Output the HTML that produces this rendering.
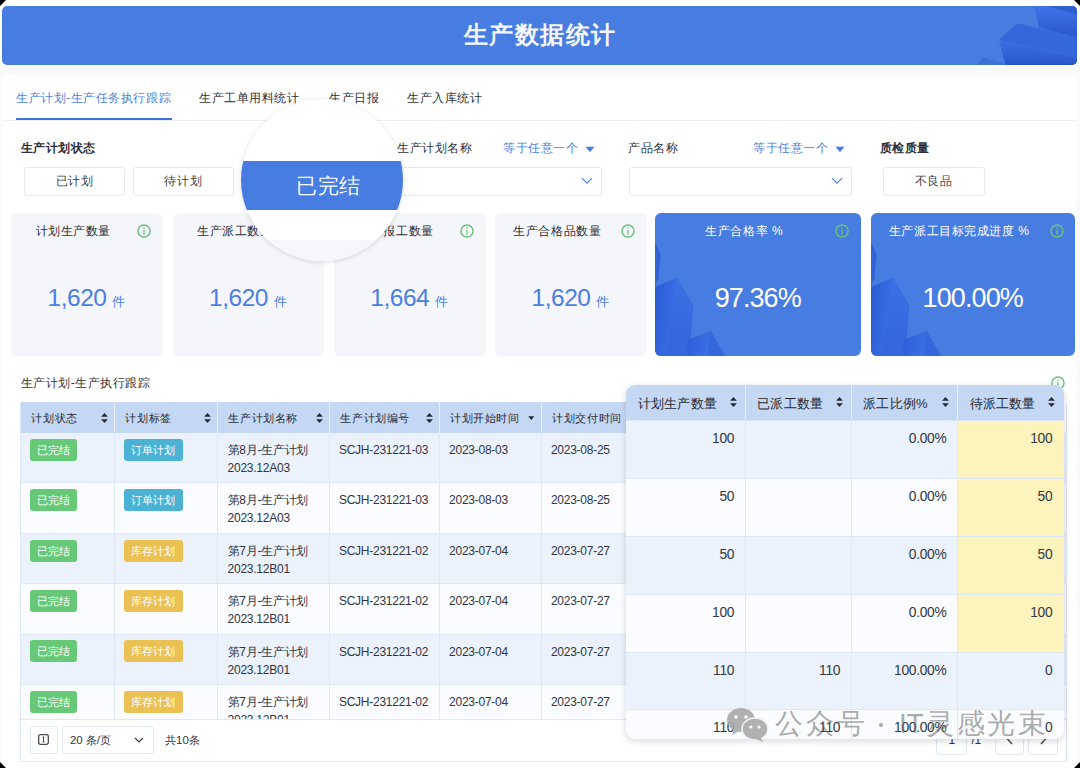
<!DOCTYPE html>
<html><head><meta charset="utf-8"><style>
*{margin:0;padding:0;box-sizing:border-box}
html,body{width:1080px;height:768px;overflow:hidden;background:#fafafc;font-family:"Liberation Sans",sans-serif;color:#333}
.a{position:absolute;white-space:nowrap}
#banner{left:2px;top:5.5px;width:1075px;height:59.7px;border-radius:5px;background:#477de1;overflow:hidden}
#title{left:0;width:1075px;top:13.2px;text-align:center;font-size:24px;font-weight:bold;color:#f4f6fb;line-height:32px;letter-spacing:1.5px;text-indent:1.5px}
#gray{left:0;top:0;width:1080px;height:65px;background:#fff}
#card{left:2px;top:74.5px;width:1075px;height:694px;background:#fff}
.cj{font-size:12px;letter-spacing:0.55px}
.tab{line-height:16px;top:89.5px;color:#2b2e35}
.lbl{line-height:16px;top:140px;color:#2f323a}
.btn{height:29px;top:166.5px;border:1px solid #e6e8ec;border-radius:3px;background:#fff;line-height:27px;text-align:center;color:#3a3f48}
.sel{height:28.5px;top:167px;border:1px solid #e6e8ec;border-radius:3px;background:#fff}
.blue{color:#4a7fe0}
.sc{top:213px;height:142.5px;border-radius:6px;background:#f5f6fa;overflow:hidden}
.sct{top:10px;line-height:16px;color:#2b2e35;text-align:center}
.num{top:71px;left:0;text-align:center;font-size:24.5px;line-height:28px;color:#4a7fe0;letter-spacing:-0.5px}
.num small{font-size:13px;margin-left:6px;letter-spacing:0.5px}
.bc{background:#477de1}
.bc .sct,.bc .num{color:#fff}
.bc .num{font-size:27px;top:70.5px;letter-spacing:-0.9px}
.info{width:14px;height:14px;line-height:0}
/* table */
#tbl{left:20.4px;top:402px;width:1047px;height:359.5px;border:1px solid #dfe8f6;border-top:0;overflow:hidden;background:#fff}
.th{top:0;height:31px;background:#c5d8f3}
.thd{top:0;height:31px;width:1px;background:#e9f0fa}
.tht{top:7.5px;font-size:11px;letter-spacing:0.6px;line-height:16px;color:#262a33}
.sort{width:7px;height:10px}
.tr{left:0;width:1047px;height:50.4px;border-bottom:1px solid #dfe8f6}
.odd{background:#ebf2fc}.even{background:#fafcff}
.vd{width:1px;background:#dfe8f6}
.td{font-size:12px;line-height:18px;color:#30353e;letter-spacing:-0.25px}
.badge{height:22px;line-height:22px;border-radius:3px;color:#fff;font-size:11px;padding:0 7.2px 0 6.6px;letter-spacing:0.2px}
.g{background:#67c878}.c{background:#4bb2d4}.y{background:#ebc153}
.pbtn{border:1px solid #dfe8f6;border-radius:3px;background:#fff}
/* panel */
#panel{left:626px;top:384.5px;width:437.6px;height:354.2px;border-radius:9px;overflow:hidden;background:#fafcff;box-shadow:0 2px 7px rgba(0,0,0,0.16)}
.ph{top:0;height:35.4px;background:#c5d8f3}
.pr{left:0;width:437.6px;height:58px;border-top:1px solid #dfe8f6}
.pt{font-size:13px;line-height:18px;color:#262a33;letter-spacing:0.2px}
.pn{font-size:13.8px;line-height:18px;color:#333842;text-align:right;letter-spacing:-0.3px}
.wm{top:703.5px;font-size:28px;line-height:40px;color:rgba(100,100,100,0.55);letter-spacing:2.9px}
</style></head><body>
<div class="a" id="gray"></div><div class="a" id="card"></div>
<div class="a" id="banner"><svg class="a" style="left:0;top:0" width="1075" height="60" viewBox="0 0 1075 60"><defs><linearGradient id="bf" x1="0" y1="0" x2="0" y2="1"><stop offset="0" stop-color="#3f74e8"/><stop offset="1" stop-color="#2b57cb"/></linearGradient><linearGradient id="bf2" x1="0" y1="0" x2="0" y2="1"><stop offset="0" stop-color="#3b70e6"/><stop offset="0.8" stop-color="#2d5bd0"/><stop offset="1" stop-color="#2450c0"/></linearGradient></defs><path d="M1031.9 0.6 L1037.4 21.7 L1075 31.5 L1075 0Z" fill="url(#bf)"/><path d="M1046 0 L1075 0 L1075 9Z" fill="#2f5fcf"/><path d="M996.9 33.9 L1015.2 17.3 L1075 31.2 L1075 52.3Z" fill="#3468d9"/><path d="M996.9 33.9 L1075 52.3 L1075 60 L1003.6 60Z" fill="url(#bf2)"/><path d="M973 60 L980.8 51.7 L1004.7 57.8 L1004.7 60Z" fill="#3d6fdb"/></svg><div class="a" id="title">生产数据统计</div></div>
<div class="a tab cj blue" style="left:16px">生产计划-生产任务执行跟踪</div>
<div class="a tab cj" style="left:199px">生产工单用料统计</div>
<div class="a tab cj" style="left:329px">生产日报</div>
<div class="a tab cj" style="left:407px">生产入库统计</div>
<div class="a" style="left:15.5px;top:117.6px;width:156.5px;height:2.8px;background:#3f72de"></div>
<div class="a" style="left:2px;top:120.2px;width:1075px;height:1px;background:#eeeff2"></div>
<div class="a lbl cj" style="left:20.5px;font-weight:bold;color:#2a2f3a">生产计划状态</div>
<div class="a btn cj" style="left:24px;width:101px">已计划</div>
<div class="a btn cj" style="left:132.5px;width:101.5px">待计划</div>
<div class="a lbl cj" style="left:397px">生产计划名称</div>
<div class="a lbl cj blue" style="left:503px">等于任意一个</div>
<svg class="a" style="left:585px;top:146px" width="10" height="7"><path d="M0.5 0.8 L9.5 0.8 L5 6.2Z" fill="#4a7fe0"/></svg>
<div class="a sel" style="left:378px;width:223.5px"></div>
<svg class="a" style="left:580.5px;top:177px" width="12" height="8"><path d="M1 1.2 L6 6.2 L11 1.2" fill="none" stroke="#4a7fe0" stroke-width="1.2"/></svg>
<div class="a lbl cj" style="left:628px">产品名称</div>
<div class="a lbl cj blue" style="left:753px">等于任意一个</div>
<svg class="a" style="left:835px;top:146px" width="10" height="7"><path d="M0.5 0.8 L9.5 0.8 L5 6.2Z" fill="#4a7fe0"/></svg>
<div class="a sel" style="left:628.5px;width:223px"></div>
<svg class="a" style="left:830.5px;top:177px" width="12" height="8"><path d="M1 1.2 L6 6.2 L11 1.2" fill="none" stroke="#4a7fe0" stroke-width="1.2"/></svg>
<div class="a lbl cj" style="left:879.5px;font-weight:bold;color:#2a2f3a">质检质量</div>
<div class="a btn cj" style="left:883px;width:101.5px">不良品</div>
<div class="a sc" style="left:11px;width:151.5px"><div class="a sct cj" style="left:0;width:124.5px">计划生产数量</div><div class="a info" style="left:126.2px;top:10.75px"><svg style="display:block" width="14" height="14" viewBox="0 0 14 14"><circle cx="7" cy="7" r="6.05" fill="none" stroke="#6cc17c" stroke-width="1.45"/><rect x="6.35" y="5.9" width="1.3" height="4.9" rx="0.65" fill="#6cc17c"/><circle cx="7" cy="4.1" r="0.8" fill="#6cc17c"/></svg></div><div class="a num" style="width:151.5px">1,620<small>件</small></div></div>
<div class="a sc" style="left:172.5px;width:151.5px"><div class="a sct cj" style="left:0;width:124.5px">生产派工数量</div><div class="a info" style="left:126.2px;top:10.75px"><svg style="display:block" width="14" height="14" viewBox="0 0 14 14"><circle cx="7" cy="7" r="6.05" fill="none" stroke="#6cc17c" stroke-width="1.45"/><rect x="6.35" y="5.9" width="1.3" height="4.9" rx="0.65" fill="#6cc17c"/><circle cx="7" cy="4.1" r="0.8" fill="#6cc17c"/></svg></div><div class="a num" style="width:151.5px">1,620<small>件</small></div></div>
<div class="a sc" style="left:333.5px;width:152px"><div class="a sct cj" style="left:0;width:125px">生产报工数量</div><div class="a info" style="left:126.7px;top:10.75px"><svg style="display:block" width="14" height="14" viewBox="0 0 14 14"><circle cx="7" cy="7" r="6.05" fill="none" stroke="#6cc17c" stroke-width="1.45"/><rect x="6.35" y="5.9" width="1.3" height="4.9" rx="0.65" fill="#6cc17c"/><circle cx="7" cy="4.1" r="0.8" fill="#6cc17c"/></svg></div><div class="a num" style="width:152px">1,664<small>件</small></div></div>
<div class="a sc" style="left:495px;width:151.5px"><div class="a sct cj" style="left:0;width:124.5px">生产合格品数量</div><div class="a info" style="left:126.2px;top:10.75px"><svg style="display:block" width="14" height="14" viewBox="0 0 14 14"><circle cx="7" cy="7" r="6.05" fill="none" stroke="#6cc17c" stroke-width="1.45"/><rect x="6.35" y="5.9" width="1.3" height="4.9" rx="0.65" fill="#6cc17c"/><circle cx="7" cy="4.1" r="0.8" fill="#6cc17c"/></svg></div><div class="a num" style="width:151.5px">1,620<small>件</small></div></div>
<div class="a sc bc" style="left:655px;width:205.5px"><svg class="a" style="left:0;top:0" width="205.5" height="143" viewBox="0 0 205.5 143"><defs><linearGradient id="dg655" x1="0" y1="0" x2="1" y2="0.3"><stop offset="0" stop-color="#2a5bd6"/><stop offset="1" stop-color="#3a6fe6"/></linearGradient><linearGradient id="dh655" x1="0" y1="0" x2="0" y2="1"><stop offset="0" stop-color="#3b70e4"/><stop offset="1" stop-color="#3466dc"/></linearGradient></defs>
<path d="M0 29 L5.7 41.6 L3.3 66.2 L0 72.7Z" fill="#3164d9"/>
<path d="M0 73.8 L22.1 64.5 L9.8 143 L0 143Z" fill="url(#dg655)"/>
<path d="M22.1 64.5 L38.5 92.4 L34.4 143 L9.8 143Z" fill="url(#dh655)"/>
<path d="M32.8 126.5 L55.7 117.8 L52 143 L32 143Z" fill="url(#dg655)"/>
<path d="M55.7 117.8 L70.5 143 L52 143Z" fill="#3668dd"/></svg><div class="a sct cj" style="left:0;width:178.5px">生产合格率 %</div><div class="a info" style="left:180.2px;top:10.75px"><svg style="display:block" width="14" height="14" viewBox="0 0 14 14"><circle cx="7" cy="7" r="6.05" fill="none" stroke="#6cc17c" stroke-width="1.45"/><rect x="6.35" y="5.9" width="1.3" height="4.9" rx="0.65" fill="#6cc17c"/><circle cx="7" cy="4.1" r="0.8" fill="#6cc17c"/></svg></div><div class="a num" style="width:205.5px">97.36%</div></div>
<div class="a sc bc" style="left:870.5px;width:204.5px"><svg class="a" style="left:0;top:0" width="204.5" height="143" viewBox="0 0 204.5 143"><defs><linearGradient id="dg870" x1="0" y1="0" x2="1" y2="0.3"><stop offset="0" stop-color="#2a5bd6"/><stop offset="1" stop-color="#3a6fe6"/></linearGradient><linearGradient id="dh870" x1="0" y1="0" x2="0" y2="1"><stop offset="0" stop-color="#3b70e4"/><stop offset="1" stop-color="#3466dc"/></linearGradient></defs>
<path d="M0 29 L5.7 41.6 L3.3 66.2 L0 72.7Z" fill="#3164d9"/>
<path d="M0 73.8 L22.1 64.5 L9.8 143 L0 143Z" fill="url(#dg870)"/>
<path d="M22.1 64.5 L38.5 92.4 L34.4 143 L9.8 143Z" fill="url(#dh870)"/>
<path d="M32.8 126.5 L55.7 117.8 L52 143 L32 143Z" fill="url(#dg870)"/>
<path d="M55.7 117.8 L70.5 143 L52 143Z" fill="#3668dd"/></svg><div class="a sct cj" style="left:0;width:177.5px">生产派工目标完成进度 %</div><div class="a info" style="left:179.2px;top:10.75px"><svg style="display:block" width="14" height="14" viewBox="0 0 14 14"><circle cx="7" cy="7" r="6.05" fill="none" stroke="#6cc17c" stroke-width="1.45"/><rect x="6.35" y="5.9" width="1.3" height="4.9" rx="0.65" fill="#6cc17c"/><circle cx="7" cy="4.1" r="0.8" fill="#6cc17c"/></svg></div><div class="a num" style="width:204.5px">100.00%</div></div>
<div class="a" style="left:240.8px;top:98.6px;width:162.3px;height:162.3px;border-radius:50%;overflow:hidden;background:#fff;box-shadow:0 1px 5px rgba(0,0,0,0.14)"><div class="a" style="left:0;top:62px;width:163px;height:49.8px;background:#477ce0"></div><div class="a" style="left:55.5px;top:73px;font-size:21px;line-height:28px;color:#f6f8fd;letter-spacing:0.3px">已完结</div><div class="a" style="left:0;top:141.3px;width:163px;height:30px;background:#f6f7fa"></div></div>
<div class="a cj" style="left:20.5px;top:375px;line-height:16px;color:#333">生产计划-生产执行跟踪</div>
<div class="a info" style="left:1051.3px;top:376.3px"><svg style="display:block" width="14" height="14" viewBox="0 0 14 14"><circle cx="7" cy="7" r="6.05" fill="none" stroke="#6cc17c" stroke-width="1.45"/><rect x="6.35" y="5.9" width="1.3" height="4.9" rx="0.65" fill="#6cc17c"/><circle cx="7" cy="4.1" r="0.8" fill="#6cc17c"/></svg></div>
<div class="a" id="tbl">
<div class="a th" style="left:0;width:1043px"></div>
<div class="a thd" style="left:93px"></div>
<div class="a thd" style="left:196.1px"></div>
<div class="a thd" style="left:308.1px"></div>
<div class="a thd" style="left:417.6px"></div>
<div class="a thd" style="left:519.9px"></div>
<div class="a thd" style="left:639px"></div>
<div class="a thd" style="left:759px"></div>
<div class="a thd" style="left:869px"></div>
<div class="a thd" style="left:959px"></div>
<div class="a tht" style="left:10px">计划状态</div>
<div class="a sort" style="left:80px;top:11px;line-height:0"><svg style="display:block" width="7" height="10" viewBox="0 0 7 10"><path d="M0.1 3.7 L3.5 0.1 L6.9 3.7Z" fill="#23283a"/><path d="M0.1 6.3 L3.5 9.9 L6.9 6.3Z" fill="#23283a"/></svg></div>
<div class="a tht" style="left:104px">计划标签</div>
<div class="a sort" style="left:183.1px;top:11px;line-height:0"><svg style="display:block" width="7" height="10" viewBox="0 0 7 10"><path d="M0.1 3.7 L3.5 0.1 L6.9 3.7Z" fill="#23283a"/><path d="M0.1 6.3 L3.5 9.9 L6.9 6.3Z" fill="#23283a"/></svg></div>
<div class="a tht" style="left:207.1px">生产计划名称</div>
<div class="a sort" style="left:295.1px;top:11px;line-height:0"><svg style="display:block" width="7" height="10" viewBox="0 0 7 10"><path d="M0.1 3.7 L3.5 0.1 L6.9 3.7Z" fill="#23283a"/><path d="M0.1 6.3 L3.5 9.9 L6.9 6.3Z" fill="#23283a"/></svg></div>
<div class="a tht" style="left:319.1px">生产计划编号</div>
<div class="a sort" style="left:404.6px;top:11px;line-height:0"><svg style="display:block" width="7" height="10" viewBox="0 0 7 10"><path d="M0.1 3.7 L3.5 0.1 L6.9 3.7Z" fill="#23283a"/><path d="M0.1 6.3 L3.5 9.9 L6.9 6.3Z" fill="#23283a"/></svg></div>
<div class="a tht" style="left:428.6px">计划开始时间</div>
<div class="a sort" style="left:506.9px;top:11px;line-height:0"><svg style="display:block" width="7" height="10" viewBox="0 0 7 10"><path d="M0.3 3.2 L3.3 7 L6.3 3.2Z" fill="#23283a"/></svg></div>
<div class="a tht" style="left:530.9px">计划交付时间</div>
<div class="a sort" style="left:626px;top:11px;line-height:0"><svg style="display:block" width="7" height="10" viewBox="0 0 7 10"><path d="M0.1 3.7 L3.5 0.1 L6.9 3.7Z" fill="#23283a"/><path d="M0.1 6.3 L3.5 9.9 L6.9 6.3Z" fill="#23283a"/></svg></div>
<div class="a tht" style="left:650px">计划生产数量</div>
<div class="a sort" style="left:746px;top:11px;line-height:0"><svg style="display:block" width="7" height="10" viewBox="0 0 7 10"><path d="M0.1 3.7 L3.5 0.1 L6.9 3.7Z" fill="#23283a"/><path d="M0.1 6.3 L3.5 9.9 L6.9 6.3Z" fill="#23283a"/></svg></div>
<div class="a tht" style="left:770px">已派工数量</div>
<div class="a sort" style="left:856px;top:11px;line-height:0"><svg style="display:block" width="7" height="10" viewBox="0 0 7 10"><path d="M0.1 3.7 L3.5 0.1 L6.9 3.7Z" fill="#23283a"/><path d="M0.1 6.3 L3.5 9.9 L6.9 6.3Z" fill="#23283a"/></svg></div>
<div class="a tht" style="left:880px">派工比例%</div>
<div class="a sort" style="left:946px;top:11px;line-height:0"><svg style="display:block" width="7" height="10" viewBox="0 0 7 10"><path d="M0.1 3.7 L3.5 0.1 L6.9 3.7Z" fill="#23283a"/><path d="M0.1 6.3 L3.5 9.9 L6.9 6.3Z" fill="#23283a"/></svg></div>
<div class="a tht" style="left:970px">待派工数量</div>
<div class="a sort" style="left:1033px;top:11px;line-height:0"><svg style="display:block" width="7" height="10" viewBox="0 0 7 10"><path d="M0.1 3.7 L3.5 0.1 L6.9 3.7Z" fill="#23283a"/><path d="M0.1 6.3 L3.5 9.9 L6.9 6.3Z" fill="#23283a"/></svg></div>
<div class="a tr odd" style="top:31.0px"></div>
<div class="a badge g" style="left:8.6px;top:36.8px">已完结</div>
<div class="a badge c" style="left:102.9px;top:36.8px">订单计划</div>
<div class="a td" style="left:206.2px;top:39.0px">第8月-生产计划<br>2023.12A03</div>
<div class="a td" style="left:317.5px;top:39.0px">SCJH-231221-03</div>
<div class="a td" style="left:427.7px;top:39.0px">2023-08-03</div>
<div class="a td" style="left:529.5px;top:39.0px">2023-08-25</div>
<div class="a tr even" style="top:81.4px"></div>
<div class="a badge g" style="left:8.6px;top:87.2px">已完结</div>
<div class="a badge c" style="left:102.9px;top:87.2px">订单计划</div>
<div class="a td" style="left:206.2px;top:89.4px">第8月-生产计划<br>2023.12A03</div>
<div class="a td" style="left:317.5px;top:89.4px">SCJH-231221-03</div>
<div class="a td" style="left:427.7px;top:89.4px">2023-08-03</div>
<div class="a td" style="left:529.5px;top:89.4px">2023-08-25</div>
<div class="a tr odd" style="top:131.8px"></div>
<div class="a badge g" style="left:8.6px;top:137.60000000000002px">已完结</div>
<div class="a badge y" style="left:102.9px;top:137.60000000000002px">库存计划</div>
<div class="a td" style="left:206.2px;top:139.8px">第7月-生产计划<br>2023.12B01</div>
<div class="a td" style="left:317.5px;top:139.8px">SCJH-231221-02</div>
<div class="a td" style="left:427.7px;top:139.8px">2023-07-04</div>
<div class="a td" style="left:529.5px;top:139.8px">2023-07-27</div>
<div class="a tr even" style="top:182.2px"></div>
<div class="a badge g" style="left:8.6px;top:188.0px">已完结</div>
<div class="a badge y" style="left:102.9px;top:188.0px">库存计划</div>
<div class="a td" style="left:206.2px;top:190.2px">第7月-生产计划<br>2023.12B01</div>
<div class="a td" style="left:317.5px;top:190.2px">SCJH-231221-02</div>
<div class="a td" style="left:427.7px;top:190.2px">2023-07-04</div>
<div class="a td" style="left:529.5px;top:190.2px">2023-07-27</div>
<div class="a tr odd" style="top:232.6px"></div>
<div class="a badge g" style="left:8.6px;top:238.4px">已完结</div>
<div class="a badge y" style="left:102.9px;top:238.4px">库存计划</div>
<div class="a td" style="left:206.2px;top:240.6px">第7月-生产计划<br>2023.12B01</div>
<div class="a td" style="left:317.5px;top:240.6px">SCJH-231221-02</div>
<div class="a td" style="left:427.7px;top:240.6px">2023-07-04</div>
<div class="a td" style="left:529.5px;top:240.6px">2023-07-27</div>
<div class="a tr even" style="top:283.0px"></div>
<div class="a badge g" style="left:8.6px;top:288.8px">已完结</div>
<div class="a badge y" style="left:102.9px;top:288.8px">库存计划</div>
<div class="a td" style="left:206.2px;top:291.0px">第7月-生产计划<br>2023.12B01</div>
<div class="a td" style="left:317.5px;top:291.0px">SCJH-231221-02</div>
<div class="a td" style="left:427.7px;top:291.0px">2023-07-04</div>
<div class="a td" style="left:529.5px;top:291.0px">2023-07-27</div>
<div class="a vd" style="left:93px;top:31px;height:286.5px"></div>
<div class="a vd" style="left:196.1px;top:31px;height:286.5px"></div>
<div class="a vd" style="left:308.1px;top:31px;height:286.5px"></div>
<div class="a vd" style="left:417.6px;top:31px;height:286.5px"></div>
<div class="a vd" style="left:519.9px;top:31px;height:286.5px"></div>
<div class="a vd" style="left:639px;top:31px;height:286.5px"></div>
<div class="a vd" style="left:759px;top:31px;height:286.5px"></div>
<div class="a vd" style="left:869px;top:31px;height:286.5px"></div>
<div class="a vd" style="left:959px;top:31px;height:286.5px"></div>
<div class="a" style="left:0;top:316.8px;width:1047px;height:43px;background:#fff;border-top:1px solid #dfe8f6"></div>
<div class="a pbtn" style="left:8.6px;top:324.1px;width:27.8px;height:27.6px"></div>
<svg class="a" style="left:17.1px;top:331.9px" width="11" height="11" viewBox="0 0 11 11"><rect x="0.65" y="0.65" width="9.7" height="9.7" rx="1.8" fill="none" stroke="#454a53" stroke-width="1.3"/><path d="M5.5 3.2V7.8" stroke="#454a53" stroke-width="1"/><path d="M4 3.6L5.5 2.2L7 3.6ZM4 7.4L5.5 8.8L7 7.4Z" fill="#454a53"/></svg>
<div class="a pbtn" style="left:40.8px;top:324.3px;width:92.2px;height:27.5px"></div>
<div class="a td" style="left:48.6px;top:329.3px;font-size:11.4px;letter-spacing:0">20 条/页</div>
<svg class="a" style="left:113.1px;top:334.8px" width="10" height="7"><path d="M1 1 L5 5 L9 1" fill="none" stroke="#3a3f48" stroke-width="1.2"/></svg>
<div class="a td" style="left:143.7px;top:329.3px;font-size:11.4px;letter-spacing:0">共10条</div>
<div class="a pbtn" style="left:914.9px;top:324.3px;width:30.4px;height:29px"></div>
<div class="a td" style="left:927px;top:329px">1</div>
<div class="a td" style="left:950px;top:329px">/1</div>
<div class="a pbtn" style="left:973.4px;top:324.3px;width:29.6px;height:29px"></div>
<div class="a pbtn" style="left:1006.6px;top:324.3px;width:29.8px;height:29px"></div>
</div>
<svg class="a" style="left:1000px;top:728px" width="60" height="20"><path d="M12 5 L7 10.5 L12 16" fill="none" stroke="#3a3f48" stroke-width="1.3"/><path d="M41 5 L46 10.5 L41 16" fill="none" stroke="#3a3f48" stroke-width="1.3"/></svg>
<div class="a" id="panel">
<div class="a ph" style="left:0;width:437.6px"></div>
<div class="a pr" style="top:35.4px;background:#ebf2fc"></div>
<div class="a" style="left:332.2px;top:36.4px;width:105.90000000000003px;height:57px;background:#fcf3bd"></div>
<div class="a pn" style="right:329.40000000000003px;top:45.4px">100</div>
<div class="a pn" style="right:117.20000000000003px;top:45.4px">0.00%</div>
<div class="a pn" style="right:11.3px;top:45.4px">100</div>
<div class="a pr" style="top:93.3px;background:#fafcff"></div>
<div class="a" style="left:332.2px;top:94.3px;width:105.90000000000003px;height:57px;background:#fcf3bd"></div>
<div class="a pn" style="right:329.40000000000003px;top:103.3px">50</div>
<div class="a pn" style="right:117.20000000000003px;top:103.3px">0.00%</div>
<div class="a pn" style="right:11.3px;top:103.3px">50</div>
<div class="a pr" style="top:151.2px;background:#ebf2fc"></div>
<div class="a" style="left:332.2px;top:152.2px;width:105.90000000000003px;height:57px;background:#fcf3bd"></div>
<div class="a pn" style="right:329.40000000000003px;top:161.2px">50</div>
<div class="a pn" style="right:117.20000000000003px;top:161.2px">0.00%</div>
<div class="a pn" style="right:11.3px;top:161.2px">50</div>
<div class="a pr" style="top:209.1px;background:#fafcff"></div>
<div class="a" style="left:332.2px;top:210.1px;width:105.90000000000003px;height:57px;background:#fcf3bd"></div>
<div class="a pn" style="right:329.40000000000003px;top:219.1px">100</div>
<div class="a pn" style="right:117.20000000000003px;top:219.1px">0.00%</div>
<div class="a pn" style="right:11.3px;top:219.1px">100</div>
<div class="a pr" style="top:267.0px;background:#ebf2fc"></div>
<div class="a pn" style="right:329.40000000000003px;top:277.0px">110</div>
<div class="a pn" style="right:223.40000000000003px;top:277.0px">110</div>
<div class="a pn" style="right:117.20000000000003px;top:277.0px">100.00%</div>
<div class="a pn" style="right:11.3px;top:277.0px">0</div>
<div class="a pr" style="top:324.9px;background:#fafcff"></div>
<div class="a pn" style="right:329.40000000000003px;top:334.9px">110</div>
<div class="a pn" style="right:223.40000000000003px;top:334.9px">110</div>
<div class="a pn" style="right:117.20000000000003px;top:334.9px">100.00%</div>
<div class="a pn" style="right:11.3px;top:334.9px">0</div>
<div class="a" style="left:119.0px;top:0;width:1.2px;height:35.5px;background:#e9f0fa"></div>
<div class="a vd" style="left:119.0px;top:35.5px;height:320px"></div>
<div class="a" style="left:225.0px;top:0;width:1.2px;height:35.5px;background:#e9f0fa"></div>
<div class="a vd" style="left:225.0px;top:35.5px;height:320px"></div>
<div class="a" style="left:331.2px;top:0;width:1.2px;height:35.5px;background:#e9f0fa"></div>
<div class="a vd" style="left:331.2px;top:35.5px;height:320px"></div>
<div class="a pt" style="left:11.8px;top:10.5px">计划生产数量</div>
<div class="a" style="left:104.0px;top:12px"><svg style="display:block" width="7" height="10" viewBox="0 0 7 10"><path d="M0.1 3.7 L3.5 0.1 L6.9 3.7Z" fill="#23283a"/><path d="M0.1 6.3 L3.5 9.9 L6.9 6.3Z" fill="#23283a"/></svg></div>
<div class="a pt" style="left:131.3px;top:10.5px">已派工数量</div>
<div class="a" style="left:210.0px;top:12px"><svg style="display:block" width="7" height="10" viewBox="0 0 7 10"><path d="M0.1 3.7 L3.5 0.1 L6.9 3.7Z" fill="#23283a"/><path d="M0.1 6.3 L3.5 9.9 L6.9 6.3Z" fill="#23283a"/></svg></div>
<div class="a pt" style="left:237.3px;top:10.5px">派工比例%</div>
<div class="a" style="left:316.2px;top:12px"><svg style="display:block" width="7" height="10" viewBox="0 0 7 10"><path d="M0.1 3.7 L3.5 0.1 L6.9 3.7Z" fill="#23283a"/><path d="M0.1 6.3 L3.5 9.9 L6.9 6.3Z" fill="#23283a"/></svg></div>
<div class="a pt" style="left:343.5px;top:10.5px">待派工数量</div>
<div class="a" style="left:422.1px;top:12px"><svg style="display:block" width="7" height="10" viewBox="0 0 7 10"><path d="M0.1 3.7 L3.5 0.1 L6.9 3.7Z" fill="#23283a"/><path d="M0.1 6.3 L3.5 9.9 L6.9 6.3Z" fill="#23283a"/></svg></div>
</div>
<svg class="a" style="left:726px;top:707px;opacity:0.9" width="43" height="35" viewBox="0 0 43 35"><ellipse cx="15" cy="13" rx="14" ry="12" fill="#a9a9a9"/><path d="M8 22 L6 28 L13 24Z" fill="#a9a9a9"/><circle cx="10" cy="10" r="1.8" fill="#fff"/><circle cx="20" cy="10" r="1.8" fill="#fff"/><ellipse cx="29" cy="22" rx="13" ry="11" fill="#a9a9a9" stroke="#f4f4f4" stroke-width="1.5"/><path d="M34 30 L37 35 L30 32Z" fill="#a9a9a9"/><circle cx="25" cy="20" r="1.6" fill="#fff"/><circle cx="33" cy="20" r="1.6" fill="#fff"/></svg>
<div class="a wm" style="left:775px;letter-spacing:2.9px">公众号</div>
<div class="a" style="left:878.8px;top:723.4px;width:4px;height:4px;border-radius:50%;background:rgba(100,100,100,0.55)"></div>
<div class="a wm" style="left:899px;letter-spacing:-0.4px">IT</div>
<div class="a wm" style="left:926px;letter-spacing:2.5px">灵感光束</div>
<svg class="a" style="left:0;top:0" width="6" height="6"><path d="M0 0H6L0 6Z" fill="#000"/></svg>
<svg class="a" style="left:1074px;top:0" width="6" height="6"><path d="M0 0H6V6Z" fill="#000"/></svg>
<svg class="a" style="left:0;top:762px" width="6" height="6"><path d="M0 0V6H6Z" fill="#000"/></svg>
<svg class="a" style="left:1074px;top:762px" width="6" height="6"><path d="M6 0V6H0Z" fill="#000"/></svg>
</body></html>
